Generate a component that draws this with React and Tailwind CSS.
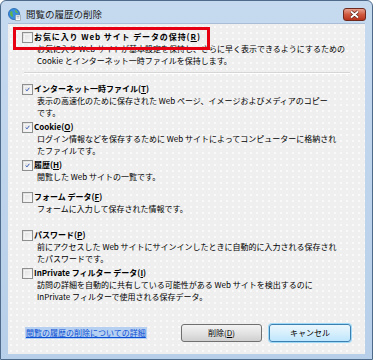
import React from 'react'

// チェックボックス（Vista 風）
function Check({ checked }) {
  return (
    <div className="w-[11px] h-[11px] shrink-0 border border-[#8e8f8f] bg-gradient-to-br from-[#dcdcdc] to-[#fbfbfb] p-[1px]">
      <div className="w-full h-full border border-[#f4f4f4] flex items-center justify-center">
        {checked && (
          <svg width="9" height="9" viewBox="0 0 9 9">
            <path d="M1.5 4.5 L3.5 7 L7.8 1.5" fill="none" stroke="#3b5db8" strokeWidth="1.8" />
          </svg>
        )}
      </div>
    </div>
  )
}

function Row({ label, keyChar, lines, checked, className = '', labelClass = '' }) {
  return (
    <div className={`pl-[14px] ${className}`}>
      <div className="flex items-center h-[12px] gap-[1px]">
        <Check checked={checked} />
        <span className={`font-bold whitespace-nowrap ${labelClass}`}>
          {label}(<span className="underline">{keyChar}</span>)
        </span>
      </div>
      <div className="pl-[15px]">
        {lines.map((l, i) => (
          <div key={i} className="h-[12px] whitespace-nowrap">
            {l}
          </div>
        ))}
      </div>
    </div>
  )
}

function GlobeIcon() {
  return (
    <svg width="13" height="13" viewBox="0 0 13 13">
      <circle cx="6" cy="6" r="5.5" fill="#3a8ee0" stroke="#1d5fa8" strokeWidth="0.8" />
      <path d="M2.5 3.5 C4 2.5 5 3.8 4.5 5 C4 6.5 5.5 7 4.8 9 C3 8.5 2 7 2 5.5 Z" fill="#5fb44a" />
      <path d="M7 2 C8.5 2.2 9.8 3.5 10 5 C9 5.5 8 4.5 7.2 4 Z" fill="#5fb44a" />
      <rect x="7.5" y="7" width="5" height="5.5" fill="#fff" stroke="#7a8a99" strokeWidth="0.6" />
      <path d="M8.5 8.5 H11.5 M8.5 10 H11.5" stroke="#7a8a99" strokeWidth="0.6" />
    </svg>
  )
}

export default function App() {
  return (
    <div className="w-[373px] h-[360px] relative flex flex-col border border-[#4f6b8c] rounded-t-[6px] bg-gradient-to-b from-[#c6daef] to-[#b7cfe9] px-[7px] pb-[5px] font-['Noto_Sans_CJK_JP',sans-serif] text-[8px] leading-[12px] text-black">
      {/* タイトルバー */}
      <div className="h-[22px] flex items-center pt-[4px] shrink-0">
        <GlobeIcon />
        <span className="ml-[5px] text-[9.5px] text-[#1b1b1b]">閲覧の履歴の削除</span>
        <div className="ml-auto -mr-[1px] w-[23px] h-[13px] rounded-[3px] border border-[#6e2a1f] bg-gradient-to-b from-[#e8a08e] via-[#d05a40] to-[#b8321a] flex items-center justify-center">
          <svg width="11" height="9" viewBox="0 0 11 9">
            <path d="M2 1.5 L9 7.5 M9 1.5 L2 7.5" stroke="#5a2016" strokeWidth="3.2" />
            <path d="M2 1.5 L9 7.5 M9 1.5 L2 7.5" stroke="#fff" strokeWidth="1.8" />
          </svg>
        </div>
      </div>

      {/* 本体 */}
      <div className="flex-1 relative flex flex-col bg-[#efefef] bg-[radial-gradient(#fafafa_0.7px,transparent_0.9px)] bg-[length:6px_6px] border-t border-[#a9bed6]">
        <Row
          className="mt-[7px]"
          labelClass="tracking-[0.9px]"
          label="お気に入り Web サイト データの保持"
          keyChar="R"
          lines={[
            'お気に入り Web サイトが基本設定を保持し、さらに早く表示できるようにするための',
            'Cookie とインターネット一時ファイルを保持します。',
          ]}
        />
        <div className="mt-[5px] ml-[16px] w-[326px] h-[2px] border-t border-[#d5d5d5] border-b border-b-white" />
        <Row
          className="mt-[9px]"
          checked
          label="インターネット一時ファイル"
          keyChar="T"
          lines={['表示の高速化のために保存された Web ページ、イメージおよびメディアのコピー', 'です。']}
        />
        <Row
          className="mt-[2px]"
          checked
          label="Cookie"
          keyChar="O"
          lines={['ログイン情報などを保存するために Web サイトによってコンピューターに格納され', 'たファイルです。']}
        />
        <Row className="mt-[2px]" checked label="履歴" keyChar="H" lines={['閲覧した Web サイトの一覧です。']} />
        <Row className="mt-[8px]" label="フォーム データ" keyChar="F" lines={['フォームに入力して保存された情報です。']} />
        <Row
          className="mt-[14px]"
          label="パスワード"
          keyChar="P"
          lines={['前にアクセスした Web サイトにサインインしたときに自動的に入力される保存され', 'たパスワードです。']}
        />
        <Row
          className="mt-[2px]"
          label="InPrivate フィルター データ"
          keyChar="I"
          lines={['訪問の詳細を自動的に共有している可能性がある Web サイトを検出するのに', 'InPrivate フィルターで使用される保存データ。']}
        />

        {/* 下部 */}
        <div className="mt-[21px] flex items-center pl-[17px] pr-[14px]">
          <span className="text-[#0b4fd2] underline bg-[#b6d0f2] px-[1px] whitespace-nowrap">
            閲覧の履歴の削除についての詳細
          </span>
          <button className="ml-auto w-[81px] h-[18px] rounded-[3px] border border-[#707070] bg-gradient-to-b from-[#f3f3f3] via-[#e3e3e3] to-[#cfcfcf] text-[8px] leading-[12px] flex items-center justify-center">
            削除(<span className="underline">D</span>)
          </button>
          <button className="ml-[7px] w-[82px] h-[18px] rounded-[3px] border border-[#3c7fb1] bg-gradient-to-b from-[#eaf6fd] via-[#d7effc] to-[#bde6fd] shadow-[0_0_0_1px_#9fd9f8] text-[8px] leading-[12px] flex items-center justify-center">
            キャンセル
          </button>
        </div>

        {/* 注釈の赤枠 */}
        <div className="absolute left-[5px] top-[3px] w-[197px] h-[23px] border-[3px] border-[#e60012]" />
      </div>
    </div>
  )
}
